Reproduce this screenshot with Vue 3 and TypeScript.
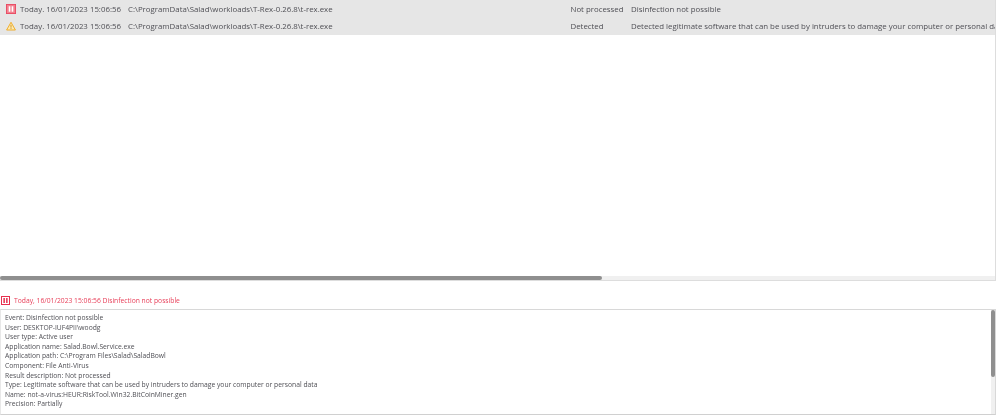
<script setup lang="ts">
interface Row { kind: 'stop' | 'warn'; date: string; path: string; status: string; message: string }
const rows: Row[] = [
  { kind: 'stop', date: 'Today. 16/01/2023 15:06:56', path: 'C:\\ProgramData\\Salad\\workloads\\T-Rex-0.26.8\\t-rex.exe', status: 'Not processed', message: 'Disinfection not possible' },
  { kind: 'warn', date: 'Today. 16/01/2023 15:06:56', path: 'C:\\ProgramData\\Salad\\workloads\\T-Rex-0.26.8\\t-rex.exe', status: 'Detected', message: 'Detected legitimate software that can be used by intruders to damage your computer or personal data' }
]
const details: string[] = [
  'Event: Disinfection not possible',
  'User: DESKTOP-IUF4PII\\woodg',
  'User type: Active user',
  'Application name: Salad.Bowl.Service.exe',
  'Application path: C:\\Program Files\\Salad\\SaladBowl',
  'Component: File Anti-Virus',
  'Result description: Not processed',
  'Type: Legitimate software that can be used by intruders to damage your computer or personal data',
  'Name: not-a-virus:HEUR:RiskTool.Win32.BitCoinMiner.gen',
  'Precision: Partially'
]
</script>

<template>
  <div class="page">
    <section class="list">
      <div class="rows">
        <div v-for="(r, i) in rows" :key="i" class="row">
          <span class="icon">
            <svg v-if="r.kind === 'stop'" width="10" height="10" viewBox="0 0 11 11">
              <rect x="0.5" y="0.5" width="10" height="10" fill="#f3808f" stroke="#e8475f" />
              <rect x="3" y="2.5" width="1.8" height="6" fill="#fff" />
              <rect x="6.2" y="2.5" width="1.8" height="6" fill="#fff" />
            </svg>
            <svg v-else width="10" height="10" viewBox="0 0 12 11">
              <path d="M6 1 L11.3 10.3 H0.7 Z" fill="#fde9b0" stroke="#f0a81e" stroke-width="1.1" stroke-linejoin="round" />
              <rect x="5.5" y="4" width="1" height="3.5" fill="#c98a10" />
              <rect x="5.5" y="8" width="1" height="1" fill="#c98a10" />
            </svg>
          </span>
          <span class="date">{{ r.date }}</span>
          <span class="path">{{ r.path }}</span>
          <span class="status">{{ r.status }}</span>
          <span class="message">{{ r.message }}</span>
        </div>
      </div>
      <div class="hscroll"><div class="hthumb"></div></div>
    </section>

    <div class="head">
      <svg width="9" height="9" viewBox="0 0 9 9">
        <rect x="0.5" y="0.5" width="8" height="8" fill="#fff" stroke="#e8304f" />
        <rect x="2.4" y="2" width="1.5" height="5" fill="#e8304f" />
        <rect x="5.1" y="2" width="1.5" height="5" fill="#e8304f" />
      </svg>
      <span>Today, 16/01/2023 15:06:56 Disinfection not possible</span>
    </div>

    <section class="box">
      <div class="lines">
        <div v-for="(d, i) in details" :key="i" class="line">{{ d }}</div>
      </div>
      <div class="vscroll"><div class="vthumb"></div></div>
    </section>
  </div>
</template>

<style>
html, body { margin: 0; background: #fff; }
</style>

<style scoped>
.page {
  width: 996px;
  height: 420px;
  display: flex;
  flex-direction: column;
  font-family: "Open Sans", "Liberation Sans", sans-serif;
  font-size: 7.85px;
  color: #4f4f55;
  background: #fff;
  overflow: hidden;
  filter: blur(0.3px);
}
.list {
  height: 281px;
  box-sizing: border-box;
  border-right: 1px solid #ddd;
  border-bottom: 1px solid #ddd;
  display: flex;
  flex-direction: column;
}
.rows { flex: 1; }
.row {
  height: 17.5px;
  background: #e6e6e6;
  display: flex;
  align-items: center;
  white-space: nowrap;
  overflow: hidden;
}
.icon { width: 20px; padding-left: 6px; box-sizing: border-box; display: flex; }
.date { width: 108px; }
.path { width: 442.5px; }
.status { width: 60.5px; }
.message { flex: 1; white-space: nowrap; overflow: hidden; }
.hscroll { height: 4px; background: #f0f0f0; }
.hthumb { width: 602px; height: 4px; background: #8f8f8f; border-radius: 2px; }
.head {
  height: 28px;
  box-sizing: border-box;
  padding: 11px 0 0 1px;
  display: flex;
  align-items: center;
  gap: 4px;
  font-size: 6.75px;
  color: #e8405a;
}
.box {
  height: 106px;
  box-sizing: border-box;
  border-top: 1px solid #d8d8d8;
  border-bottom: 1px solid #d0d0d0;
  border-left: 1px solid #e8e8e8;
  border-right: 1px solid #d8d8d8;
  font-size: 6.75px;
  display: flex;
}
.lines { flex: 1; padding: 3px 0 0 4px; }
.line { height: 9.6px; line-height: 9.6px; white-space: nowrap; }
.vscroll { width: 4px; background: #f0f0f0; }
.vthumb { width: 4px; height: 67px; background: #8f8f8f; border-radius: 2px; }
</style>
